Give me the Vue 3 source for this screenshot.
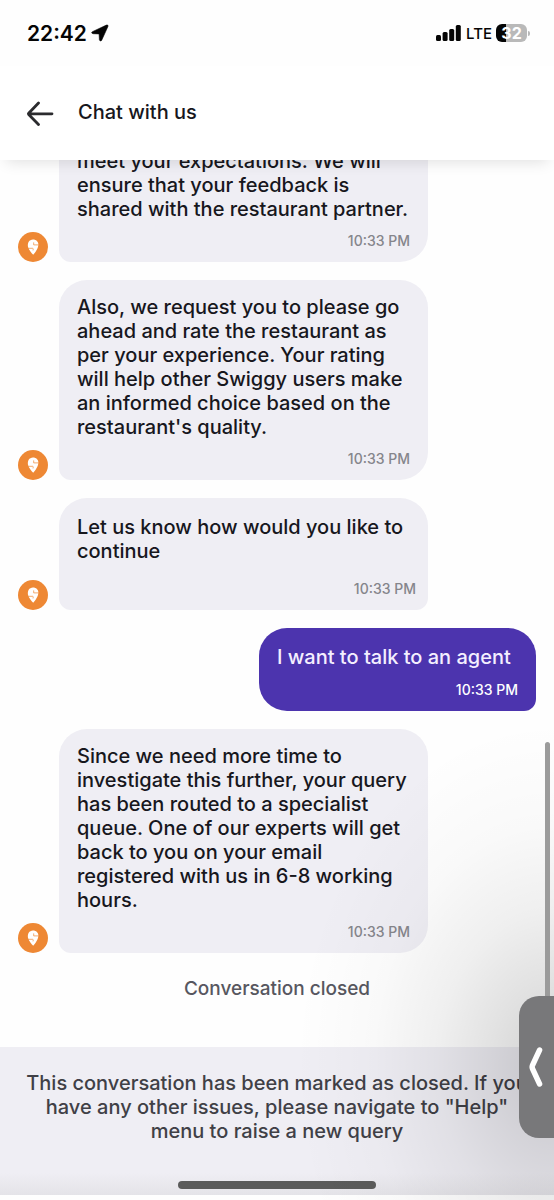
<script setup>
const messages = [
  {
    from: 'bot',
    lines: ['meet your expectations. We will', 'ensure that your feedback is', 'shared with the restaurant partner.'],
    time: '10:33 PM',
  },
  {
    from: 'bot',
    lines: [
      'Also, we request you to please go',
      'ahead and rate the restaurant as',
      'per your experience. Your rating',
      'will help other Swiggy users make',
      'an informed choice based on the',
      "restaurant's quality.",
    ],
    time: '10:33 PM',
  },
  {
    from: 'bot',
    prompt: true,
    lines: ['Let us know how would you like to', 'continue'],
    time: '10:33 PM',
  },
  { from: 'user', lines: ['I want to talk to an agent'], time: '10:33 PM' },
  {
    from: 'bot',
    lines: [
      'Since we need more time to',
      'investigate this further, your query',
      'has been routed to a specialist',
      'queue. One of our experts will get',
      'back to you on your email',
      'registered with us in 6-8 working',
      'hours.',
    ],
    time: '10:33 PM',
  },
]

const closedNotice = [
  'This conversation has been marked as closed. If you',
  'have any other issues, please navigate to "Help"',
  'menu to raise a new query',
]
</script>

<template>
  <div class="screen">
    <div class="status">
      <div class="clock">
        <span>22:42</span>
        <svg width="18" height="18" viewBox="0 0 18 18" aria-hidden="true">
          <path d="M1.4 7.7 15.4 1.1Q17.6.4 16.9 2.6L10.6 16.4Q9.2 18 8.4 15.8L8.1 9.9 2 9.7Q-.4 8.9 1.4 7.7Z" fill="#050505" stroke="#050505" stroke-width=".6" />
        </svg>
      </div>
      <div class="signals">
        <svg width="26" height="16" viewBox="0 0 26 16" aria-hidden="true">
          <g fill="#050505">
            <rect x="0" y="10" width="5" height="6" rx="1.5" />
            <rect x="6.6" y="7" width="5" height="9" rx="1.5" />
            <rect x="13.2" y="4" width="5" height="12" rx="1.5" />
            <rect x="19.8" y="0" width="5" height="16" rx="1.5" />
          </g>
        </svg>
        <span class="network">LTE</span>
        <span class="battery"><span class="cell">32</span><i class="cap"></i></span>
      </div>
    </div>

    <header class="header">
      <button class="back" type="button" aria-label="Back">
        <svg width="28" height="26" viewBox="0 0 28 26" aria-hidden="true">
          <path d="M12.5 3 2.7 13.2Q2.1 13.8 2.7 14.4L12.5 24.4M2.4 13.8H26" fill="none" stroke="#2b2b2e" stroke-width="2.8" stroke-linecap="round" stroke-linejoin="round" />
        </svg>
      </button>
      <h1 class="title">Chat with us</h1>
    </header>

    <main class="chat">
      <div
        v-for="(message, index) in messages"
        :key="index"
        class="row"
        :class="[message.from, { prompt: message.prompt }]"
      >
        <svg v-if="message.from === 'bot'" class="avatar" width="30" height="30" viewBox="0 0 30 30" role="img" aria-label="Swiggy">
          <circle cx="15" cy="15" r="15" fill="#ee8834" />
          <path d="M15.2 22.8C13.4 20.8 10.8 17.6 10.2 15.4 9 11 11.2 7.4 15 7.4 18.2 7.4 20.4 9.6 20.4 12.4 20.4 16 17.4 20.2 15.2 22.8Z" fill="#fff" />
          <path d="M15.7 10.4V12.9H20.8" fill="none" stroke="#ee8834" stroke-width=".7" />
          <path d="M10 16.3H14.6Q15.3 16.3 15.2 17.3L15 18.4" fill="none" stroke="#ee8834" stroke-width=".7" />
        </svg>
        <article class="bubble">
          <p class="text">{{ message.lines.join('\n') }}</p>
          <time class="time">{{ message.time }}</time>
        </article>
      </div>
      <p class="closed">Conversation closed</p>
    </main>

    <footer class="notice">
      <p class="notice-text">{{ closedNotice.join('\n') }}</p>
      <div class="home"></div>
    </footer>

    <div class="shade"></div>
    <div class="scrollbar"></div>
    <button class="drawer" type="button" aria-label="Open side panel">
      <svg width="14" height="40" viewBox="0 0 14 40" aria-hidden="true">
        <path d="M10.6 3 3.4 18.5Q2.8 20 3.4 21.5L10.6 37" fill="none" stroke="#fff" stroke-width="5.4" stroke-linecap="round" stroke-linejoin="round" />
      </svg>
    </button>
  </div>
</template>

<style>
body {
  background: #fff;
}
</style>

<style scoped>
.screen {
  position: relative;
  display: flex;
  flex-direction: column;
  height: 100vh;
  overflow: hidden;
  background: #fefefe;
  color: #17171d;
  font-family: Inter, "Liberation Sans", sans-serif;
  font-weight: 500;
}
p,
h1 {
  margin: 0;
}
button {
  padding: 0;
  border: 0;
  background: none;
}
.status {
  display: flex;
  flex: none;
  align-items: center;
  justify-content: space-between;
  height: 66px;
  padding: 0 24px 0 27px;
  box-sizing: border-box;
  background: #fefefe;
  color: #050505;
}
.clock {
  display: flex;
  align-items: center;
  gap: 4px;
  font-size: 21px;
  font-weight: 600;
}
.signals {
  display: flex;
  align-items: center;
  gap: 4px;
}
.network {
  font-size: 15px;
  font-weight: 500;
}
.battery {
  display: flex;
  align-items: center;
  gap: 1px;
}
.cell {
  width: 31px;
  border-radius: 6px;
  background: linear-gradient(90deg, #050505 33%, #b9b9b9 33%);
  color: #fff;
  font-size: 16px;
  font-weight: 700;
  line-height: 18px;
  text-align: center;
}
.cap {
  width: 2px;
  height: 5px;
  border-radius: 0 2px 2px 0;
  background: #b9b9b9;
}
.header {
  position: relative;
  z-index: 1;
  display: flex;
  flex: none;
  align-items: center;
  gap: 24px;
  height: 94px;
  padding: 0 26px;
  box-sizing: border-box;
  background: #fff;
  box-shadow: 0 8px 14px -6px rgba(0, 0, 0, 0.12);
}
.back {
  display: flex;
}
.title {
  padding-bottom: 2px;
  font-size: 20px;
  font-weight: 500;
  line-height: 24px;
}
.chat {
  display: flex;
  flex: 1;
  flex-direction: column;
  justify-content: flex-end;
  gap: 18px;
  min-height: 0;
  padding: 0 18px 46px;
  overflow: hidden;
}
.row {
  display: flex;
  flex: none;
  align-items: flex-end;
  gap: 11px;
}
.row.user {
  justify-content: flex-end;
}
.avatar {
  flex: none;
}
.bubble {
  display: flex;
  flex-direction: column;
  gap: 11px;
  box-sizing: border-box;
  width: 369px;
  padding: 15px 18px 12px;
  border-radius: 28px 28px 28px 12px;
  background: #efeef4;
}
.user .bubble {
  gap: 12px;
  width: auto;
  min-width: 277px;
  padding-top: 17px;
  border-radius: 28px 28px 12px 28px;
  background: #4c34ae;
  color: #f4efff;
}
.text {
  font-size: 20px;
  line-height: 24px;
  white-space: pre;
}
.time {
  align-self: flex-end;
  color: #85858b;
  font-size: 14px;
  line-height: 18px;
}
.user .time {
  color: #fff;
}
.prompt .bubble {
  gap: 17px;
  padding: 17px 12px 12px 18px;
  border-radius: 28px 28px 12px 12px;
}
.closed {
  flex: none;
  padding-top: 6px;
  color: #57575f;
  font-size: 19px;
  line-height: 24px;
  text-align: center;
}
.notice {
  display: flex;
  flex: none;
  flex-direction: column;
  align-items: center;
  gap: 38px;
  margin-bottom: 5px;
  padding: 24px 0 6px;
  background: linear-gradient(#efeef4 85%, #e4e3e8);
}
.notice-text {
  color: #404046;
  font-size: 20px;
  line-height: 24px;
  text-align: center;
  white-space: pre;
}
.home {
  width: 198px;
  height: 8px;
  border-radius: 4px;
  background: #5b5b5b;
}
.shade {
  position: absolute;
  z-index: 1;
  right: 0;
  bottom: 0;
  width: 260px;
  height: 480px;
  background: radial-gradient(ellipse farthest-side at 100% 72%, rgba(0, 0, 0, 0.18), rgba(0, 0, 0, 0.11) 25%, rgba(0, 0, 0, 0.06) 45%, rgba(0, 0, 0, 0.02) 70%, rgba(0, 0, 0, 0));
  pointer-events: none;
}
.scrollbar {
  position: absolute;
  z-index: 1;
  top: 742px;
  right: 4px;
  width: 5px;
  height: 280px;
  border-radius: 3px;
  background: #9b9b9b;
}
.drawer {
  position: absolute;
  z-index: 2;
  right: 0;
  bottom: 62px;
  display: flex;
  align-items: center;
  width: 35px;
  height: 142px;
  padding-left: 10px;
  border-radius: 20px 0 0 20px;
  background: #78787a;
}
</style>
